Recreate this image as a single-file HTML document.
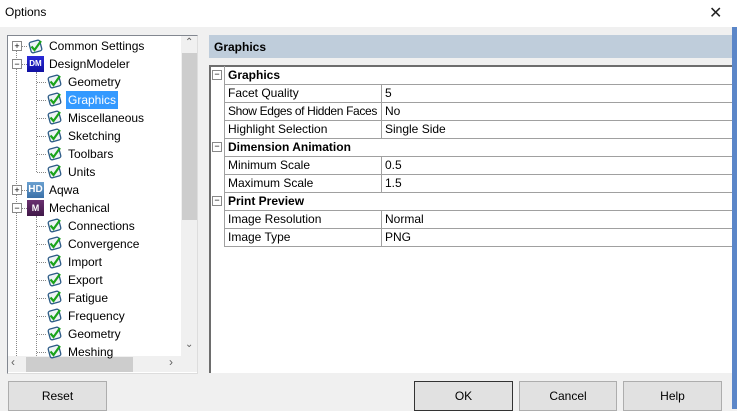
<!DOCTYPE html>
<html><head><style>
body{margin:0;width:737px;height:409px;overflow:hidden;background:#f0f0f0;font-family:"Liberation Sans",Arial,sans-serif;font-size:12px;position:relative;color:#000}
.a{position:absolute}
.row{position:absolute;height:18px;line-height:18px;white-space:nowrap}
.gl{position:absolute;left:224px;right:5px;height:1px;background:#a0a0a0}
.btn{position:absolute;top:381px;height:30px;background:#e1e1e1;border:1px solid #adadad;text-align:center;line-height:28px;box-sizing:border-box}
.dv{position:absolute;border-left:1px dotted #888}
.dh{position:absolute;border-top:1px dotted #888;height:0}
.exp{position:absolute;width:8px;height:8px;border:1px solid #888;background:#fff;font-size:9px;line-height:8px;text-align:center}
</style></head><body>
<div class="a" style="left:0;top:0;width:737px;height:27px;background:#fff"></div>
<div class="a" style="left:5px;top:5px;font-size:12px">Options</div>
<div class="a" style="left:709px;top:3px;font-size:16px;font-family:'DejaVu Sans',sans-serif;font-weight:200;color:#222">✕</div>
<div class="a" style="left:732px;top:27px;width:5px;height:382px;background:#5b86c8"></div>

<!-- tree -->
<div class="a" style="left:7px;top:35px;width:189px;height:337px;background:#fff;border:1px solid #828790;border-right-color:#ddd;border-bottom-color:#ddd"></div>
<div class="a" style="left:181px;top:36px;width:16px;height:320px;background:#f0f0f0"></div>
<div class="a" style="left:182px;top:53px;width:15px;height:167px;background:#cdcdcd"></div>
<div class="a" style="left:185px;top:37px;font-size:10px;color:#606060">&#8963;</div>
<div class="a" style="left:185px;top:339px;font-size:10px;color:#606060">&#8964;</div>
<div class="a" style="left:8px;top:356px;width:189px;height:16px;background:#f0f0f0"></div>
<div class="a" style="left:26px;top:357px;width:107px;height:15px;background:#cdcdcd"></div>
<div class="a" style="left:11px;top:355px;font-size:12px;color:#606060">&lsaquo;</div>
<div class="a" style="left:169px;top:355px;font-size:12px;color:#606060">&rsaquo;</div>

<div class="dv" style="left:16px;top:50px;height:160px"></div>
<div class="dv" style="left:16px;top:208px;height:148px"></div>
<div class="dv" style="left:36px;top:72px;height:100px"></div>
<div class="dv" style="left:36px;top:216px;height:140px"></div>

<div id="tree"></div>
<script>
var chk='<svg width="17" height="17" viewBox="0 0 17 17"><rect x="3" y="3" width="11" height="11" rx="2" transform="rotate(-15 8.5 8.5)" fill="#eef3f6" stroke="#2b5a86" stroke-width="1.3"/><path d="M4.5 8.5 L7.5 12 L14 3" fill="none" stroke="#1aa31a" stroke-width="2.2"/></svg>';
var items=[[0,'Common Settings','c','+'],[0,'DesignModeler','dm','−'],[1,'Geometry'],[1,'Graphics',1],[1,'Miscellaneous'],[1,'Sketching'],[1,'Toolbars'],[1,'Units'],[0,'Aqwa','hd','+'],[0,'Mechanical','m','−'],[1,'Connections'],[1,'Convergence'],[1,'Import'],[1,'Export'],[1,'Fatigue'],[1,'Frequency'],[1,'Geometry'],[1,'Meshing']];
var h='';
items.forEach(function(it,i){
 var y=37+i*18, cy=y+9;
 if(it[0]==0){
  h+='<div class="exp" style="left:12px;top:'+(cy-5)+'px">'+it[3]+'</div>';
  h+='<div class="dh" style="left:22px;top:'+cy+'px;width:5px"></div>';
  var ic;
  if(it[2]=='c')ic=chk;
  else if(it[2]=='dm')ic='<div style="width:17px;height:16px;background:linear-gradient(#2a2ad8,#1010a0);color:#fff;font-size:8px;font-weight:bold;line-height:16px;text-align:center">DM</div>';
  else if(it[2]=='hd')ic='<div style="width:17px;height:16px;background:linear-gradient(#6aa0d0,#3a70a8);color:#fff;font-size:10px;font-weight:bold;line-height:16px;text-align:center">HD</div>';
  else ic='<div style="width:17px;height:16px;background:linear-gradient(#6a3070,#401848);color:#fff;font-size:9px;font-weight:bold;line-height:16px;text-align:center">M</div>';
  h+='<div class="a" style="left:27px;top:'+(y+1)+'px">'+ic+'</div>';
  h+='<div class="row" style="left:49px;top:'+y+'px">'+it[1]+'</div>';
 } else {
  h+='<div class="dh" style="left:37px;top:'+cy+'px;width:9px"></div>';
  h+='<div class="a" style="left:46px;top:'+(y)+'px">'+chk+'</div>';
  h+='<div class="row" style="left:66px;top:'+y+'px;padding:0 2px;'+(it[2]?'background:#3399ff;color:#fff':'')+'">'+it[1]+'</div>';
 }
});
document.getElementById('tree').innerHTML=h;
</script>

<!-- right -->
<div class="a" style="left:209px;top:35px;width:523px;height:23px;background:#bfcddb"></div>
<div class="a" style="left:214px;top:40px;font-weight:bold;font-size:12px">Graphics</div>
<div class="a" style="left:209px;top:65px;width:523px;height:308px;background:#fff;border-left:2px solid #6d6d6d;border-top:2px solid #6d6d6d;box-sizing:border-box"></div>
<div class="a" style="left:224px;top:66px;width:1px;height:181px;background:#a0a0a0"></div>
<div id="grid"></div>
<script>
var g=[['Graphics',0],['Facet Quality','5'],['Show Edges of Hidden Faces','No'],['Highlight Selection','Single Side'],['Dimension Animation',0],['Minimum Scale','0.5'],['Maximum Scale','1.5'],['Print Preview',0],['Image Resolution','Normal'],['Image Type','PNG']];
var s='';
g.forEach(function(r,i){
 var y=66+i*18;
 s+='<div class="gl" style="top:'+(y+18)+'px"></div>';
 if(r[1]===0){
  s+='<div class="exp" style="left:212px;top:'+(y+4)+'px;line-height:7px">−</div>';
  s+='<div class="row" style="left:228px;top:'+y+'px;font-weight:bold">'+r[0]+'</div>';
 } else {
  s+='<div class="row" style="left:228px;top:'+y+'px;width:151px;overflow:hidden;'+(r[0].length>20?'letter-spacing:-0.35px':'')+'">'+r[0]+'</div>';
  s+='<div class="a" style="left:381px;top:'+y+'px;width:1px;height:18px;background:#a0a0a0"></div>';
  s+='<div class="row" style="left:385px;top:'+y+'px">'+r[1]+'</div>';
 }
});
document.getElementById('grid').innerHTML=s;
</script>

<div class="btn" style="left:8px;width:99px;">Reset</div>
<div class="btn" style="left:414px;width:99px;border:1px solid #333">OK</div>
<div class="btn" style="left:519px;width:98px;">Cancel</div>
<div class="btn" style="left:623px;width:99px;">Help</div>
</body></html>
